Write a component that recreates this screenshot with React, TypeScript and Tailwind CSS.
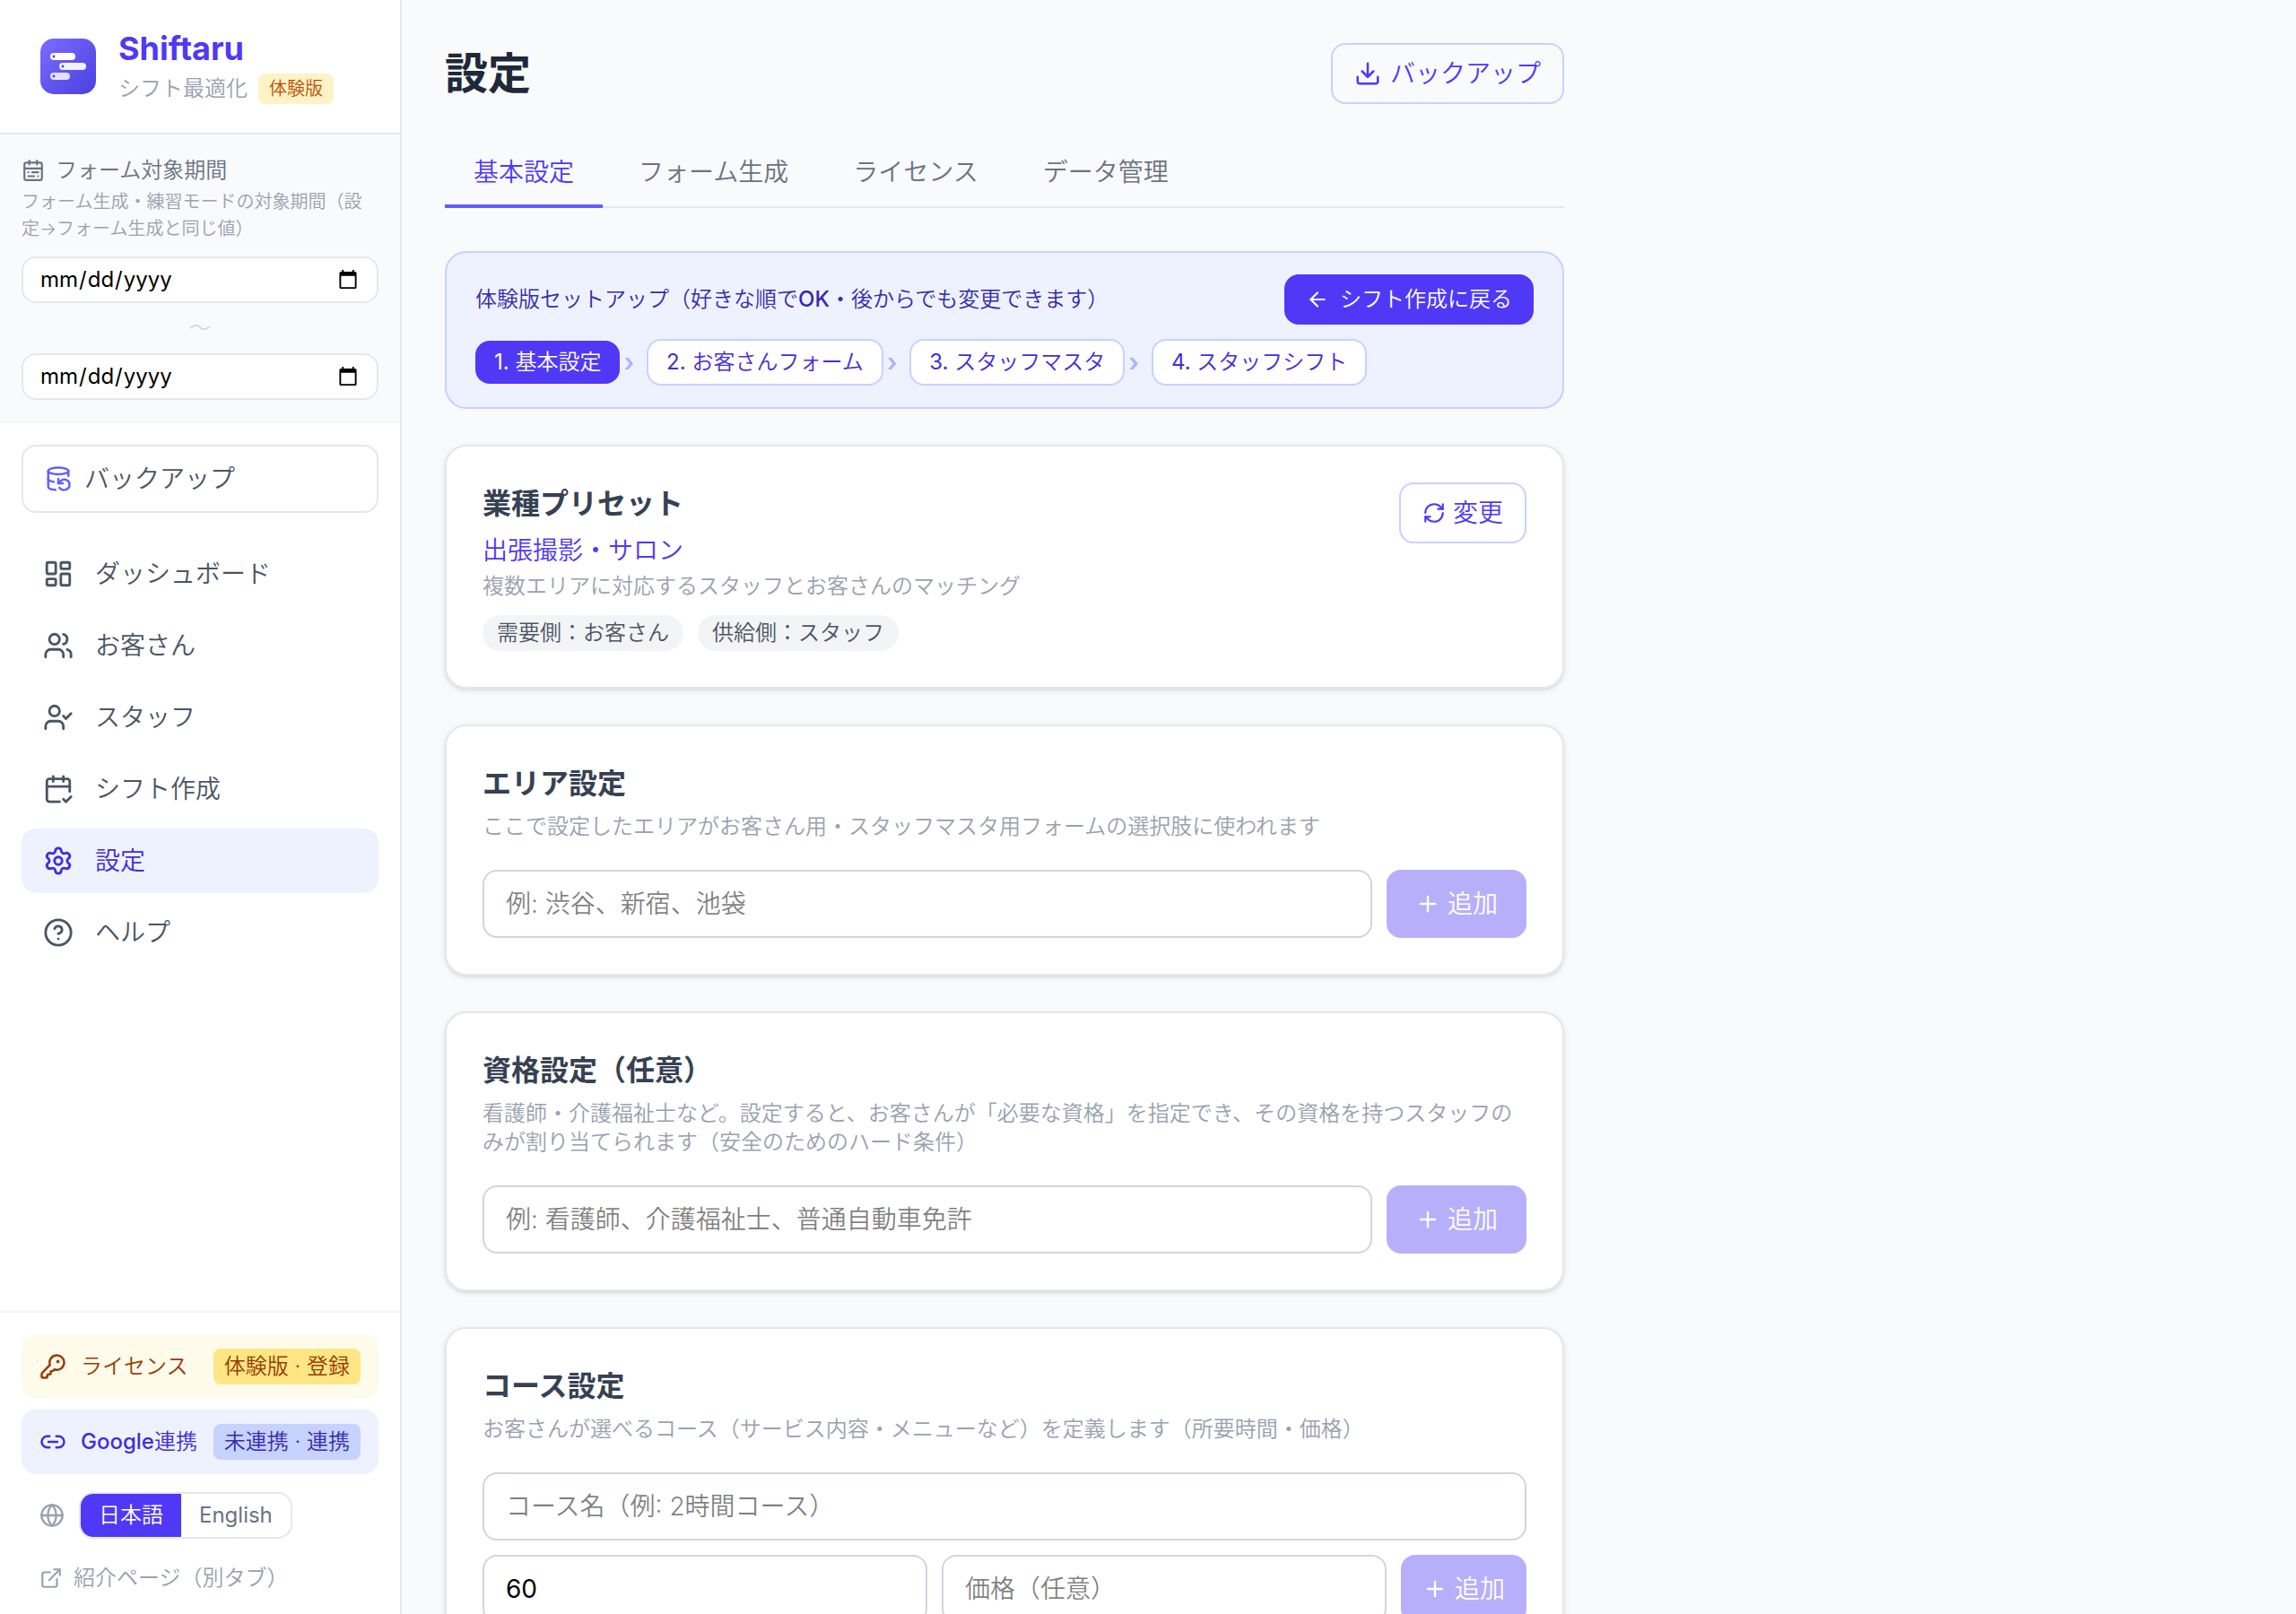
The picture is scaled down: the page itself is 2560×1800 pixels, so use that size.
import { useState } from 'react'
import {
  ArrowLeft,
  CalendarCheck2,
  CalendarRange,
  CircleHelp,
  DatabaseBackup,
  Download,
  ExternalLink,
  Globe,
  KeyRound,
  LayoutDashboard,
  Link2,
  Plus,
  RefreshCw,
  Settings,
  UserCheck,
  Users,
} from 'lucide-react'

const navItems = [
  { id: 'dashboard', label: 'ダッシュボード', icon: LayoutDashboard },
  { id: 'customers', label: 'お客さん', icon: Users },
  { id: 'staff', label: 'スタッフ', icon: UserCheck },
  { id: 'shift', label: 'シフト作成', icon: CalendarCheck2 },
  { id: 'settings', label: '設定', icon: Settings },
  { id: 'help', label: 'ヘルプ', icon: CircleHelp },
]

const tabs = ['基本設定', 'フォーム生成', 'ライセンス', 'データ管理']

const steps = ['基本設定', 'お客さんフォーム', 'スタッフマスタ', 'スタッフシフト']

const inputClass =
  'h-[76px] min-w-0 flex-1 rounded-2xl border-2 border-gray-300 bg-white px-6 text-[28px] leading-10 font-normal text-black placeholder:font-[350] focus:outline-none focus:border-indigo-500'

function Logo() {
  return (
    <svg viewBox="0 0 72 72" className="size-18 shrink-0" aria-hidden="true">
      <defs>
        <linearGradient id="logoBg" x1="0" y1="0" x2="1" y2="1">
          <stop offset="0" stopColor="#7c6cff" />
          <stop offset="1" stopColor="#4a3fe0" />
        </linearGradient>
      </defs>
      <rect x="5" y="5" width="62" height="62" rx="15" fill="url(#logoBg)" />
      <rect x="16" y="21" width="28" height="8" rx="4" fill="#fff" />
      <rect x="26" y="32" width="30" height="8" rx="4" fill="#fff" opacity="0.92" />
      <rect x="16" y="43" width="22" height="8" rx="4" fill="#fff" opacity="0.82" />
      <circle cx="20" cy="25" r="1.4" fill="#4f39f6" />
      <circle cx="30" cy="36" r="1.4" fill="#4f39f6" />
      <circle cx="20" cy="47" r="1.4" fill="#4f39f6" />
    </svg>
  )
}

function DateInput({ label }: { label: string }) {
  return (
    <input
      type="date"
      aria-label={label}
      className="block h-[52px] w-full rounded-2xl border-2 border-gray-200 bg-white px-[18px] text-2xl font-normal text-black"
    />
  )
}

function Sidebar() {
  const [active, setActive] = useState('settings')
  const [lang, setLang] = useState<'ja' | 'en'>('ja')

  return (
    <aside className="flex h-full w-[448px] shrink-0 flex-col border-r-2 border-gray-200 bg-white">
      <div className="flex items-center gap-5 border-b-2 border-gray-200 px-10 py-8">
        <Logo />
        <div>
          <p className="text-4xl leading-[44px] font-bold text-indigo-600">Shiftaru</p>
          <div className="mt-1.5 flex items-center gap-3">
            <span className="text-2xl text-gray-400">シフト最適化</span>
            <span className="rounded-lg bg-amber-100 px-3 py-0.5 text-xl leading-[30px] text-amber-700">体験版</span>
          </div>
        </div>
      </div>

      {/* Form period */}
      <div className="border-b-2 border-gray-100 bg-gray-50 p-6">
        <div className="flex items-center gap-3 text-2xl text-gray-500">
          <CalendarRange size={26} />
          <span>フォーム対象期間</span>
        </div>
        <p className="mt-1 mb-4 text-xl leading-[30px] text-gray-400">
          フォーム生成・練習モードの対象期間（設定→フォーム生成と同じ値）
        </p>
        <DateInput label="開始日" />
        <div className="my-3 text-center text-2xl text-gray-300">〜</div>
        <DateInput label="終了日" />
      </div>

      <div className="px-6 pt-6">
        <button className="flex w-full items-center gap-3.5 rounded-2xl border-2 border-gray-200 px-6 py-4 text-[28px] leading-10 text-gray-600 hover:bg-gray-50">
          <DatabaseBackup size={30} className="text-indigo-500" />
          バックアップ
        </button>
      </div>

      <nav className="flex flex-1 flex-col gap-2 px-6 pt-8">
        {navItems.map(({ id, label, icon: Icon }) => (
          <a
            key={id}
            href={`#${id}`}
            onClick={() => setActive(id)}
            className={`flex items-center gap-6 rounded-2xl px-6 py-4 text-[28px] leading-10 ${
              active === id ? 'bg-indigo-50 text-indigo-700' : 'text-gray-600 hover:bg-gray-50'
            }`}
          >
            <Icon size={34} />
            {label}
          </a>
        ))}
      </nav>

      <div className="flex flex-col gap-3 border-t-2 border-gray-100 p-6">
        <button className="flex items-center gap-4 rounded-2xl bg-amber-50 px-5 py-4 text-2xl text-amber-800">
          <KeyRound size={30} />
          <span>ライセンス</span>
          <span className="ml-auto rounded-lg bg-amber-200 px-3 py-1">体験版 · 登録</span>
        </button>
        <button className="flex items-center gap-4 rounded-2xl bg-indigo-50 px-5 py-4 text-2xl text-indigo-700">
          <Link2 size={30} />
          <span>
            <span className="font-medium">Google</span>連携
          </span>
          <span className="ml-auto rounded-lg bg-indigo-200 px-3 py-1 text-indigo-800">未連携 · 連携</span>
        </button>
        <div className="flex items-center gap-4 px-5 py-2">
          <Globe size={28} className="text-gray-400" />
          <div className="flex overflow-hidden rounded-2xl border-2 border-gray-200 text-2xl">
            <button
              onClick={() => setLang('ja')}
              className={`px-5 py-2 ${lang === 'ja' ? 'bg-indigo-600 text-white' : 'text-gray-500'}`}
            >
              日本語
            </button>
            <button
              onClick={() => setLang('en')}
              className={`px-5 py-2 font-normal ${lang === 'en' ? 'bg-indigo-600 text-white' : 'text-gray-500'}`}
            >
              English
            </button>
          </div>
        </div>
        <a href="#about" className="flex items-center gap-3 px-5 pt-2 text-2xl text-gray-400">
          <ExternalLink size={26} />
          紹介ページ（別タブ）
        </a>
      </div>
    </aside>
  )
}

function Card({ children }: { children: React.ReactNode }) {
  return (
    <section className="mt-10 rounded-3xl border-2 border-gray-200 bg-white p-10 shadow-[0_2px_6px_rgb(0_0_0/0.1),0_2px_4px_-2px_rgb(0_0_0/0.1)]">
      {children}
    </section>
  )
}

function CardHeading({ title, description }: { title: string; description: string }) {
  return (
    <div className="mb-8">
      <h2 className="text-[32px] leading-[48px] font-bold text-gray-700">{title}</h2>
      <p className="mt-2 text-2xl text-gray-400">{description}</p>
    </div>
  )
}

function AddButton({ compact = false }: { compact?: boolean }) {
  return (
    <button
      disabled
      className={`flex shrink-0 items-center gap-2 rounded-2xl bg-indigo-600 text-[28px] leading-10 text-white disabled:opacity-40 ${
        compact ? 'px-6' : 'px-8'
      }`}
    >
      <Plus size={28} />
      追加
    </button>
  )
}

export default function App() {
  const [tab, setTab] = useState(tabs[0])
  const [minutes, setMinutes] = useState('60')

  return (
    <div className="flex h-screen bg-gray-50 font-['Inter','Noto_Sans_CJK_JP',sans-serif] font-[350]">
      <Sidebar />

      <main className="flex-1 overflow-y-auto [scrollbar-width:none]">
        <div className="max-w-[1344px] p-12">
          <div className="flex items-center justify-between">
            <h1 className="text-5xl font-bold text-gray-800">設定</h1>
            <button className="flex items-center gap-2.5 rounded-2xl border-2 border-indigo-200 px-6 py-3 text-[28px] leading-10 text-indigo-600">
              <Download size={30} />
              バックアップ
            </button>
          </div>

          {/* Tabs */}
          <div role="tablist" className="mt-10 flex gap-2 border-b-2 border-gray-200">
            {tabs.map((name) => (
              <button
                key={name}
                role="tab"
                aria-selected={tab === name}
                onClick={() => setTab(name)}
                className={`-mb-0.5 border-b-4 px-8 py-4 text-[28px] leading-10 ${
                  tab === name ? 'border-indigo-500 text-indigo-600' : 'border-transparent text-gray-500'
                }`}
              >
                {name}
              </button>
            ))}
          </div>

          {/* Setup guide */}
          <div className="mt-12 rounded-3xl border-2 border-indigo-200 bg-indigo-50 px-8 py-6">
            <div className="flex items-center justify-between">
              <p className="text-2xl text-indigo-800">
                体験版セットアップ（好きな順で<span className="font-medium">OK</span>・後からでも変更できます）
              </p>
              <button className="flex items-center gap-3 rounded-2xl bg-indigo-600 px-6 py-3 text-2xl text-white">
                <ArrowLeft size={26} />
                シフト作成に戻る
              </button>
            </div>
            <div className="mt-4 flex items-center gap-3.5 text-2xl">
              {steps.map((step, i) => (
                <div key={step} className="flex items-center gap-1">
                  <button
                    className={`rounded-2xl py-2 ${
                      i === 0
                        ? 'bg-indigo-600 px-[21px] text-white'
                        : 'border-2 border-indigo-200 bg-white px-5 text-indigo-700'
                    }`}
                  >
                    <span className="font-normal">{i + 1}. </span>
                    {step}
                  </button>
                  {i < steps.length - 1 && (
                    <span className="text-[28px] leading-10 font-semibold text-indigo-300">›</span>
                  )}
                </div>
              ))}
            </div>
          </div>

          {/* Industry preset */}
          <Card>
            <div className="flex items-start justify-between">
              <div>
                <h2 className="text-[32px] leading-[48px] font-bold text-gray-700">業種プリセット</h2>
                <p className="mt-2 text-[28px] leading-10 text-indigo-600">出張撮影・サロン</p>
                <p className="mt-1 text-2xl text-gray-400">
                  複数エリアに対応するスタッフとお客さんのマッチング
                </p>
                <div className="mt-4 flex gap-4 text-2xl text-gray-600">
                  <span className="rounded-full bg-gray-100 px-4 py-1">需要側：お客さん</span>
                  <span className="rounded-full bg-gray-100 px-4 py-1">供給側：スタッフ</span>
                </div>
              </div>
              <button className="flex items-center gap-2 rounded-2xl border-2 border-indigo-200 px-6 py-3 text-[28px] leading-10 text-indigo-600">
                <RefreshCw size={26} />
                変更
              </button>
            </div>
          </Card>

          {/* Areas */}
          <Card>
            <CardHeading
              title="エリア設定"
              description="ここで設定したエリアがお客さん用・スタッフマスタ用フォームの選択肢に使われます"
            />
            <div className="flex gap-4">
              <input type="text" aria-label="エリア" placeholder="例: 渋谷、新宿、池袋" className={inputClass} />
              <AddButton />
            </div>
          </Card>

          {/* Qualifications */}
          <Card>
            <CardHeading
              title="資格設定（任意）"
              description="看護師・介護福祉士など。設定すると、お客さんが「必要な資格」を指定でき、その資格を持つスタッフのみが割り当てられます（安全のためのハード条件）"
            />
            <div className="flex gap-4">
              <input
                type="text"
                aria-label="資格"
                placeholder="例: 看護師、介護福祉士、普通自動車免許"
                className={inputClass}
              />
              <AddButton />
            </div>
          </Card>

          {/* Courses */}
          <Card>
            <CardHeading
              title="コース設定"
              description="お客さんが選べるコース（サービス内容・メニューなど）を定義します（所要時間・価格）"
            />
            <div className="flex">
              <input
                type="text"
                aria-label="コース名"
                placeholder="コース名（例: 2時間コース）"
                className={inputClass}
              />
            </div>
            <div className="mt-4 flex gap-4">
              <input
                type="text"
                inputMode="numeric"
                aria-label="所要時間（分）"
                value={minutes}
                onChange={(e) => setMinutes(e.target.value)}
                className={inputClass}
              />
              <input type="text" aria-label="価格" placeholder="価格（任意）" className={inputClass} />
              <AddButton compact />
            </div>
          </Card>
        </div>
      </main>
    </div>
  )
}
